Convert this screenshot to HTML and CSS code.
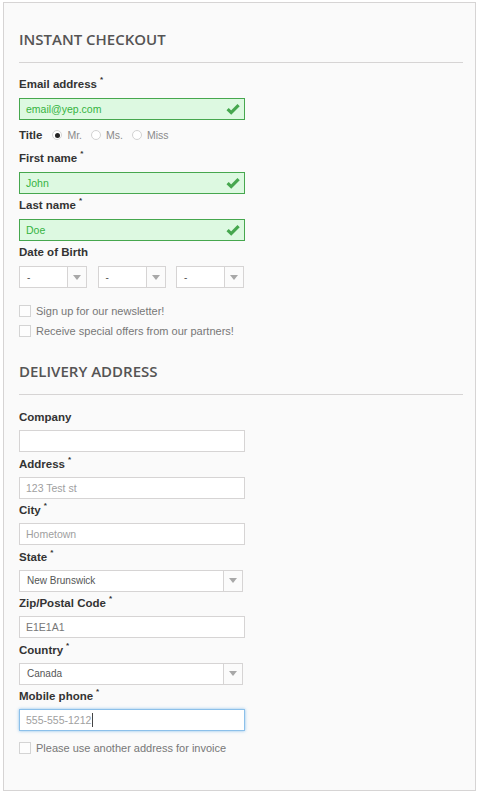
FILE: index.html
```html
<!DOCTYPE html>
<html>
<head>
<meta charset="utf-8">
<link rel="stylesheet" href="styles.css">
</head>
<body>
<div class="box">
  <h3 class="heading">Instant checkout</h3>
  <div class="top">
    <div class="field">
      <div class="lbl">Email address<sup>*</sup></div>
      <div class="input valid">email@yep.com
        <svg class="check" viewBox="0 0 14 12" width="14" height="12"><polyline points="1.6,6.2 5.2,9.6 12.6,2.2" fill="none" stroke="#46a74e" stroke-width="3.2"/></svg>
      </div>
    </div>
    <div class="title-row">
      <span class="lbl-inline">Title</span>
      <span class="radio checked"></span><span class="rtext">Mr.</span>
      <span class="radio"></span><span class="rtext">Ms.</span>
      <span class="radio"></span><span class="rtext">Miss</span>
    </div>
    <div class="field">
      <div class="lbl">First name<sup>*</sup></div>
      <div class="input valid">John
        <svg class="check" viewBox="0 0 14 12" width="14" height="12"><polyline points="1.6,6.2 5.2,9.6 12.6,2.2" fill="none" stroke="#46a74e" stroke-width="3.2"/></svg>
      </div>
    </div>
    <div class="field">
      <div class="lbl">Last name<sup>*</sup></div>
      <div class="input valid">Doe
        <svg class="check" viewBox="0 0 14 12" width="14" height="12"><polyline points="1.6,6.2 5.2,9.6 12.6,2.2" fill="none" stroke="#46a74e" stroke-width="3.2"/></svg>
      </div>
    </div>
    <div class="field">
      <div class="lbl">Date of Birth</div>
      <div class="dob">
        <div class="select"><span class="sval">-</span><span class="arrow"></span></div>
        <div class="select"><span class="sval">-</span><span class="arrow"></span></div>
        <div class="select"><span class="sval">-</span><span class="arrow"></span></div>
      </div>
    </div>
    <div class="checks">
      <div class="crow"><span class="cbox"></span><span class="ctext">Sign up for our newsletter!</span></div>
      <div class="crow"><span class="cbox"></span><span class="ctext">Receive special offers from our partners!</span></div>
    </div>
  </div>

  <h3 class="heading heading-delivery">Delivery address</h3>
  <div class="delivery">
    <div class="field">
      <div class="lbl">Company</div>
      <div class="input"></div>
    </div>
    <div class="field">
      <div class="lbl">Address<sup>*</sup></div>
      <div class="input ph">123 Test st</div>
    </div>
    <div class="field">
      <div class="lbl">City<sup>*</sup></div>
      <div class="input ph">Hometown</div>
    </div>
    <div class="field">
      <div class="lbl">State<sup>*</sup></div>
      <div class="select wide"><span class="sval">New Brunswick</span><span class="arrow"></span></div>
    </div>
    <div class="field">
      <div class="lbl">Zip/Postal Code<sup>*</sup></div>
      <div class="input">E1E1A1</div>
    </div>
    <div class="field">
      <div class="lbl">Country<sup>*</sup></div>
      <div class="select wide"><span class="sval">Canada</span><span class="arrow"></span></div>
    </div>
    <div class="field">
      <div class="lbl">Mobile phone<sup>*</sup></div>
      <div class="input ph focus">555-555-1212<span class="caret"></span></div>
    </div>
    <div class="crow invoice"><span class="cbox"></span><span class="ctext">Please use another address for invoice</span></div>
  </div>
</div>
</body>
</html>
```
FILE: styles.css
```css
html, body {
  margin: 0;
  background: #ffffff;
  font-family: "Liberation Sans", Arial, sans-serif;
}

.box {
  margin: 2px 0 0 3px;
  width: 473px;
  box-sizing: border-box;
  border: 1px solid #d6d4d4;
  background: #fafafa;
  padding: 26px 12px 32px 15px;
}

.heading {
  margin: 0 0 12px 0;
  font-family: "Open Sans", sans-serif;
  font-weight: 600;
  font-size: 15px;
  line-height: 20px;
  color: #555454;
  text-transform: uppercase;
  padding-bottom: 13px;
  border-bottom: 1px solid #d6d4d4;
}

.heading-delivery {
  margin-top: 20px;
  margin-bottom: 13px;
}

.lbl {
  font-weight: bold;
  font-size: 11.5px;
  line-height: 18px;
  height: 18px;
  color: #333333;
  margin-bottom: 5px;
}

.lbl sup {
  font-size: 8px;
  line-height: 1;
  vertical-align: top;
  position: relative;
  top: 1px;
  margin-left: 3px;
}

.top .field {
  margin-bottom: 2px;
}

.delivery .field {
  margin-bottom: 2.5px;
}

.delivery .lbl {
  margin-bottom: 4px;
}

.input {
  position: relative;
  width: 226px;
  height: 22px;
  box-sizing: border-box;
  border: 1px solid #d6d4d4;
  background: #ffffff;
  padding: 0 6px;
  display: flex;
  align-items: center;
  font-size: 10.5px;
  color: #777777;
}

.input.ph {
  color: #a0a0a0;
}

.input.valid {
  background: #ddf9e1;
  border-color: #46a74e;
  color: #35b33f;
}

.input.focus {
  border-color: #8cc0ea;
  box-shadow: 0 0 3px rgba(102, 175, 233, 0.75);
}

.caret {
  display: inline-block;
  width: 1px;
  height: 14px;
  background: #444;
  margin-left: 1px;
}

.check {
  position: absolute;
  right: 4px;
  top: 4px;
}

.title-row {
  display: flex;
  align-items: center;
  height: 18px;
  margin: 6px 0 5px 0;
}

.lbl-inline {
  font-weight: bold;
  font-size: 11.5px;
  color: #333333;
  margin-right: 10px;
}

.radio {
  width: 10px;
  height: 10px;
  box-sizing: border-box;
  border-radius: 50%;
  border: 1px solid #d2d2d2;
  background: #ffffff;
  margin-right: 5px;
  display: flex;
  align-items: center;
  justify-content: center;
}

.radio.checked::after {
  content: "";
  width: 5px;
  height: 5px;
  border-radius: 50%;
  background: #222;
}

.rtext {
  font-size: 10.5px;
  color: #8a8a8a;
  margin-right: 9px;
}

.dob {
  display: grid;
  grid-template-columns: 68px 68px 68px;
  column-gap: 10.5px;
}

.select {
  height: 22px;
  box-sizing: border-box;
  border: 1px solid #d6d4d4;
  background: #ffffff;
  display: flex;
  font-size: 10px;
  color: #555555;
}

.select.wide {
  width: 224px;
}

.sval {
  flex: 1;
  padding-left: 7px;
  display: flex;
  align-items: center;
}

.arrow {
  width: 18px;
  border-left: 1px solid #d6d4d4;
  background: #fbfbfb;
  display: flex;
  align-items: center;
  justify-content: center;
}

.arrow::after {
  content: "";
  width: 0;
  height: 0;
  border-left: 4.5px solid transparent;
  border-right: 4.5px solid transparent;
  border-top: 5px solid #a8a8a8;
}

.checks {
  margin-top: 13px;
}

.crow {
  display: flex;
  align-items: center;
  height: 20px;
}

.cbox {
  width: 12px;
  height: 12px;
  box-sizing: border-box;
  border: 1px solid #d4d4d4;
  background: #fdfdfd;
  margin-right: 5px;
}

.ctext {
  font-size: 11px;
  color: #777777;
}

.crow.invoice {
  margin-top: 6.5px;
}
```
